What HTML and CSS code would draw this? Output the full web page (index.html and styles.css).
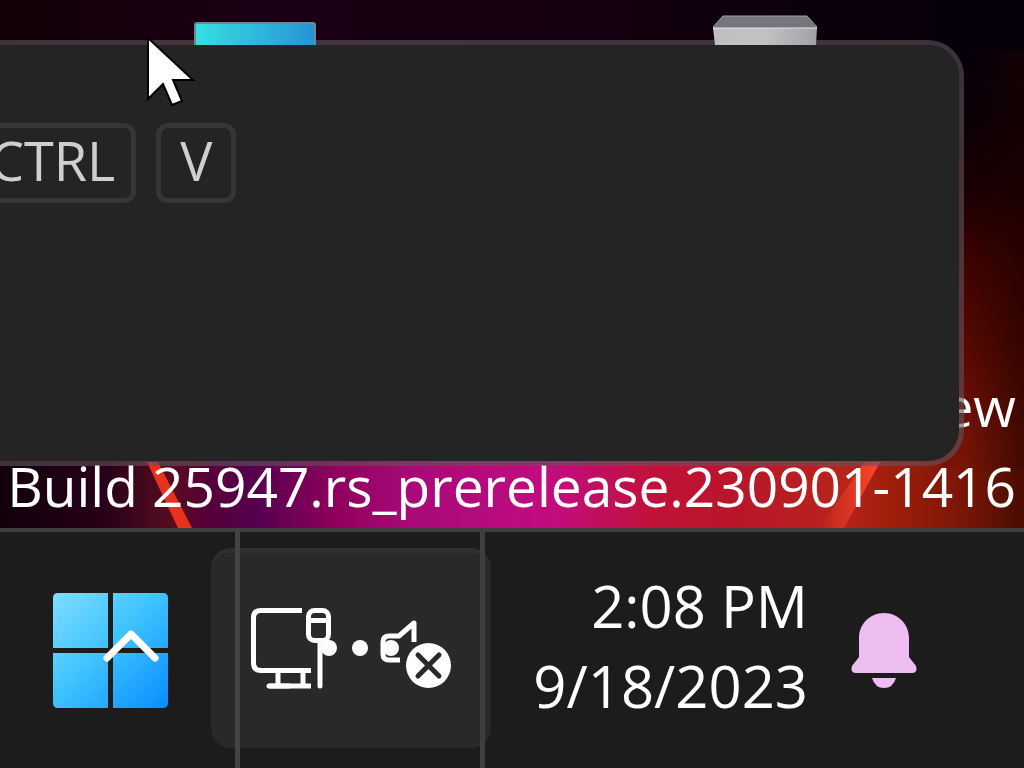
FILE: index.html
```html
<!DOCTYPE html>
<html lang="en">

<head>
    <meta charset="utf-8">
    <meta name="viewport" content="width=device-width, initial-scale=1.0">
    <title>Desktop</title>
    <link rel="stylesheet" href="styles.css">
</head>

<body>

    <main class="desktop">
        <svg class="wallpaper" viewBox="0 0 1024 528" preserveAspectRatio="none" aria-hidden="true">
            <defs>
                <linearGradient id="top" x1="0" x2="1" y1="0" y2="0">
                    <stop offset="0" stop-color="#110006" />
                    <stop offset=".25" stop-color="#1a0015" />
                    <stop offset=".6" stop-color="#140010" />
                    <stop offset="1" stop-color="#04000a" />
                </linearGradient>
                <linearGradient id="side" x1="0" x2="0" y1="0" y2="1">
                    <stop offset="0" stop-color="#05000a" />
                    <stop offset=".15" stop-color="#0a0006" />
                    <stop offset=".3" stop-color="#1c0003" />
                    <stop offset=".45" stop-color="#400300" />
                    <stop offset=".65" stop-color="#5c0a02" />
                    <stop offset=".8" stop-color="#741206" />
                    <stop offset="1" stop-color="#801804" />
                </linearGradient>
                <linearGradient id="shade" x1="0" x2="1" y1="0" y2="0">
                    <stop offset="0" stop-color="#1c0200" stop-opacity="0" />
                    <stop offset="1" stop-color="#1c0200" stop-opacity=".6" />
                </linearGradient>
                <linearGradient id="bloom" x1="0" x2="1" y1="0" y2="0">
                    <stop offset="0" stop-color="#12000c" />
                    <stop offset=".1" stop-color="#260018" />
                    <stop offset=".17" stop-color="#5a0c20" />
                    <stop offset=".2" stop-color="#560038" />
                    <stop offset=".25" stop-color="#55004f" />
                    <stop offset=".33" stop-color="#90005c" />
                    <stop offset=".4" stop-color="#a80a78" />
                    <stop offset=".54" stop-color="#c20c80" />
                    <stop offset=".64" stop-color="#c01238" />
                    <stop offset=".72" stop-color="#b8162a" />
                    <stop offset=".82" stop-color="#b8241c" />
                    <stop offset=".87" stop-color="#a01e0c" />
                    <stop offset=".94" stop-color="#7a1606" />
                    <stop offset="1" stop-color="#480c02" />
                </linearGradient>
                <linearGradient id="streak" x1="0" x2="1" y1="0" y2="0">
                    <stop offset="0" stop-color="#ff4a2c" stop-opacity="0" />
                    <stop offset=".8" stop-color="#ff4a2c" stop-opacity=".8" />
                    <stop offset="1" stop-color="#ff4a2c" />
                </linearGradient>
            </defs>
            <rect width="1024" height="440" fill="url(#top)" />
            <rect x="930" y="50" width="94" height="478" fill="url(#side)" />
            <rect x="964" y="50" width="60" height="478" fill="url(#shade)" />
            <path d="M0 440H940V470H1024V528H0z" fill="url(#bloom)" />
            <path d="M147 462h11l34 66h-14z" fill="#e8321c" />
            <path d="M880 462l-36 66h-24l44-66z" fill="url(#streak)" />
        </svg>

        <div class="watermark">
            <p>Windows 11 Pro Insider Preview</p>
            <p>Build 25947.rs_prerelease.230901-1416</p>
        </div>

        <section class="flyout" aria-label="Clipboard shortcut">
            <kbd>CTRL</kbd>
            <kbd>V</kbd>
        </section>

        <svg class="shortcut" viewBox="0 0 122 23" aria-hidden="true">
            <defs>
                <linearGradient id="cyan" x1="0" x2="1" y1="0" y2="0">
                    <stop offset="0" stop-color="#36dfe2" />
                    <stop offset="1" stop-color="#2594d4" />
                </linearGradient>
            </defs>
            <path d="M1 23V3q0-2 2-2h116q2 0 2 2v20z" fill="url(#cyan)" />
            <path d="M1 23V3q0-2 2-2h116q2 0 2 2v20" fill="none" stroke="#6f8796" stroke-width="2" />
        </svg>
        <svg class="recycle-bin" viewBox="0 0 104 30" aria-hidden="true">
            <defs>
                <linearGradient id="bin" x1="0" x2="1" y1="0" y2="0">
                    <stop offset="0" stop-color="#bfbfc1" />
                    <stop offset=".5" stop-color="#c2c2c4" />
                    <stop offset="1" stop-color="#a2a2a6" />
                </linearGradient>
            </defs>
            <path d="M10 1h84l10 11v2H0v-2z" fill="#77747d" stroke="#a09ea6" />
            <path d="M0 13h104l-1 17H2z" fill="url(#bin)" />
            <path d="M0 13h104" stroke="#e6e6e8" />
        </svg>

        <svg class="cursor" viewBox="0 0 50 72" aria-hidden="true">
            <path d="M3 4v61l15-15 9 21 10-4-9-21h20z" fill="#fff" stroke="#000" stroke-width="2" />
        </svg>
    </main>

    <footer class="taskbar">
        <button class="start" aria-label="Start">
            <svg viewBox="0 0 116 116">
                <defs>
                    <linearGradient id="win" gradientUnits="userSpaceOnUse" x1="0" y1="0" x2="116" y2="116">
                        <stop offset="0" stop-color="#80dcff" />
                        <stop offset=".45" stop-color="#40c4ff" />
                        <stop offset="1" stop-color="#068cff" />
                    </linearGradient>
                </defs>
                <path d="M5 0h50v55H0V5q0-5 5-5zM60 0h50q5 0 5 5v50H60zM0 60h55v55H5q-5 0-5-5zM60 60h55v50q0 5-5 5H60z" fill="url(#win)" />
                <path d="M54 65L78 41l24 24" fill="none" stroke="#fff" stroke-width="7" stroke-linecap="round" stroke-linejoin="round" />
            </svg>
        </button>

        <button class="tray" aria-label="Network and volume">
            <svg viewBox="0 0 202 82">
                <g fill="none" stroke="#fff" stroke-width="5" stroke-linejoin="round">
                    <path d="M51 2.500H10Q2.500 2.500 2.500 10V55q0 7.500 7.500 7.500H60M27 63V78M52 63V78" />
                    <path d="M18 78H60" />
                    <path d="M18 78h20M69 35V78" stroke-linecap="round" />
                    <rect x="57.500" y="2.500" width="20" height="30" rx="6" />
                    <path d="M58 12.500h20" />
                    <path d="M163 34V15L148 28H138q-6 0-6 6V46q0 6 6 6h11" />
                </g>
                <g fill="#fff">
                    <circle cx="78" cy="40" r="8" />
                    <circle cx="109" cy="40" r="8" />
                    <circle cx="140" cy="40" r="8" />
                    <circle cx="177.500" cy="57.500" r="22.500" />
                </g>
                <path d="M167 47l21 21M188 47l-21 21" stroke="#292929" stroke-width="5" stroke-linecap="round" />
            </svg>
        </button>

        <button class="clock">
            <time>2:08 PM</time>
            <time datetime="2023-09-18">9/18/2023</time>
        </button>

        <button class="notifications" aria-label="Notifications">
            <svg viewBox="0 0 66 76">
                <path d="M33 0C19 0 8 11 8 25V44L1 53q-2 7 4 7H61q6 0 4-7L58 44V25C58 11 47 0 33 0zM21 65h24q-3 10-12 10T21 65z" fill="#eebdf2" />
            </svg>
        </button>
    </footer>

</body>

</html>
```

FILE: styles.css
```css
body {
    margin: 0;
    min-height: 100vh;
    display: flex;
    flex-direction: column;
    overflow: hidden;
    background-color: #1c1c1c;
    color: #fff;
    font-family: "Open Sans", "Noto Sans", sans-serif;
    font-size: 58px;
}

button {
    border: none;
    padding: 0;
    background: none;
    color: inherit;
    font: inherit;
}

svg {
    display: block;
}

.desktop {
    position: relative;
    flex: 1;
    display: flex;
    flex-direction: column;
    justify-content: flex-end;
    overflow: hidden;
}

.wallpaper {
    position: absolute;
    inset: 0;
    width: 100%;
    height: 100%;
}

.watermark {
    position: relative;
    padding: 0 8px 2px 0;
    font-size: 55px;
    line-height: 80px;
    text-align: right;
    white-space: nowrap;
}

.watermark p {
    margin: 0;
}

.flyout {
    position: absolute;
    top: 40px;
    right: 60px;
    bottom: 62px;
    left: -60px;
    box-sizing: border-box;
    display: flex;
    align-items: flex-start;
    gap: 20px;
    padding: 78px 24px;
    border: 5px solid rgba(95, 85, 92, 0.6);
    border-radius: 36px;
    background-color: #242424;
    background-clip: padding-box;
}

kbd {
    box-sizing: border-box;
    min-width: 80px;
    height: 80px;
    padding: 0 16px;
    border: 5px solid #363636;
    border-radius: 12px;
    color: #cfcfcf;
    font-family: inherit;
    font-size: 54px;
    line-height: 64px;
    text-align: center;
}

.shortcut {
    position: absolute;
    top: 22px;
    left: 194px;
    width: 122px;
}

.recycle-bin {
    position: absolute;
    top: 15px;
    right: 207px;
    width: 104px;
}

.cursor {
    position: absolute;
    top: 34px;
    left: 145px;
    width: 50px;
}

.taskbar {
    box-sizing: border-box;
    height: 240px;
    display: flex;
    align-items: center;
    padding: 0 107px 4px 53px;
    border-top: 4px solid #423d40;
}

.start {
    padding-top: 6px;
}

.start svg {
    width: 116px;
}

.tray {
    position: relative;
    width: 280px;
    height: 200px;
    margin-left: 42px;
    padding-bottom: 4px;
    border-top: 5px solid #2f2f2f;
    border-radius: 20px;
    background-color: #292929;
}

.tray svg {
    width: 202px;
    margin-left: 40px;
}

/* window edges running through the tray */
.tray::before,
.tray::after {
    content: "";
    position: absolute;
    top: -24px;
    bottom: -20px;
    width: 5px;
    background-color: #444;
}

.tray::before {
    left: 24px;
}

.tray::after {
    right: 6px;
    background-color: #3e3e3e;
}

.clock {
    margin-left: auto;
    margin-right: 43px;
    padding-bottom: 4px;
    display: flex;
    flex-direction: column;
    line-height: 80px;
    text-align: right;
}

.notifications {
    padding-top: 6px;
}

.notifications svg {
    width: 66px;
}
```
